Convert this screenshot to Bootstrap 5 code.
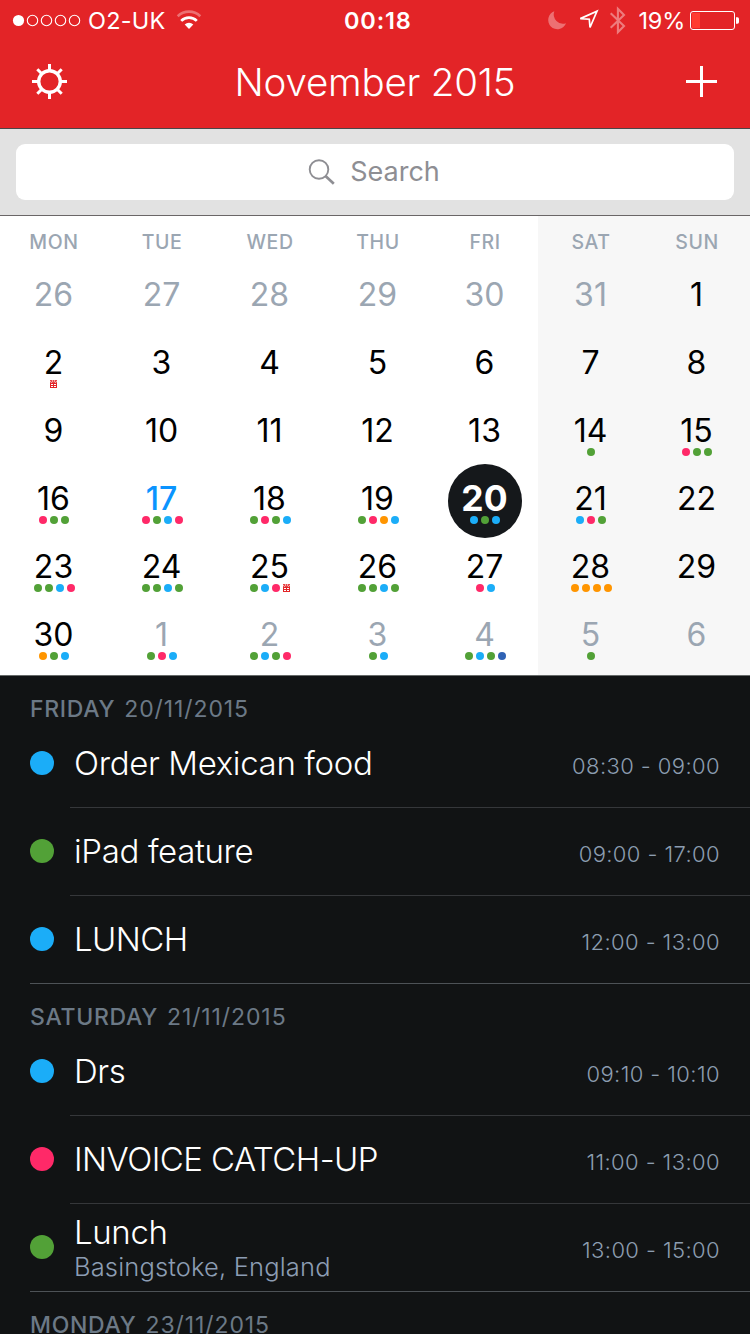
<!DOCTYPE html>
<html lang="en">
<head>
<meta charset="utf-8">
<meta name="viewport" content="width=device-width, initial-scale=1">
<title>Calendar</title>
<link href="https://cdn.jsdelivr.net/npm/bootstrap@5.3.0/dist/css/bootstrap.min.css" rel="stylesheet">
<style>
  :root { --blue:#1badf8; --green:#52a137; --pink:#ff2968; --orange:#ff9500; --navy:#2f62b4; }
  body { font-family: Inter, "Liberation Sans", sans-serif; width:750px; height:1334px; overflow:hidden; background:#111314; line-height:1; }
  svg { display:block; flex:none; overflow:visible; }
  .top-bar { background:#e32427; height:129px; border-bottom:1px solid #4b4647; color:#fff; }
  .status { height:41px; display:grid; grid-template-columns:344px 1fr auto; font-size:23.5px; white-space:nowrap; }
  .carrier { letter-spacing:.2px; }
  .clock { font-weight:600; letter-spacing:.85px; }
  .battery-text { width:48px; letter-spacing:-.2px; padding-left:.5px; }
  .title-row { height:82px; display:grid; grid-template-columns:64px 1fr 64px; }
  .month { font-weight:300; font-size:38.5px; letter-spacing:-.2px; }
  .search-bar { height:87px; background:#e2e2e2; border-bottom:1px solid #6a6667; padding:15px 16px; }
  .search-box { height:56px; border-radius:9px; background:#fff; color:#8e8e93; font-size:27px; gap:14px; padding:0 2px 1px 0; }
  .calendar { height:460px; border-bottom:1px solid #666a69; background:linear-gradient(90deg,#fff 538px,#f7f7f7 538px); }
  .week { display:grid; grid-template-columns:repeat(4,108px) repeat(3,106px); text-align:center; }
  .names { height:44px; padding-top:17px; font-size:19.5px; font-weight:500; letter-spacing:.6px; line-height:19px; color:#9ba6b2; }
  .day { height:68px; position:relative; font-size:32px; line-height:32px; padding-top:19px; color:#000; }
  .day.other { color:#9ba6b2; }
  .day.today { color:#0a94ff; font-weight:500; }
  .day.chosen { color:#fff; font-weight:700; font-size:35.5px; }
  .day.chosen::before { content:""; position:absolute; width:74px; height:74px; border-radius:50%; background:#15181b; left:16px; top:0; }
  .day .num, .day .marks { position:relative; }
  .num { display:block; height:32px; padding-right:1px; }
  .marks { height:8px; gap:3px; margin-top:1px; }
  .mark-dot { width:8px; height:8px; border-radius:50%; }
  .blue { background:var(--blue); } .green { background:var(--green); } .pink { background:var(--pink); } .orange { background:var(--orange); } .navy { background:var(--navy); }
  .agenda-head { height:44px; padding:22px 0 0 30px; font-size:23px; line-height:23px; color:#6c7986; white-space:nowrap; }
  .agenda-head b { font-weight:500; letter-spacing:.7px; }
  .agenda-head span { letter-spacing:.9px; margin-left:9px; }
  .event { height:88px; padding-left:30px; }
  .event-dot { width:24px; height:24px; border-radius:50%; margin-right:16px; margin-bottom:2px; flex:none; }
  .event-body { height:88px; border-bottom:1px solid #35373a; padding:0 30px 2px 4px; }
  .event.final { background:linear-gradient(#4d5256,#4d5256) 30px 87px/100% 1px no-repeat; }
  .event.final .event-body { border-color:transparent; }
  .event-name { color:#fff; font-weight:300; font-size:33px; line-height:40px; letter-spacing:-.36px; }
  .event-name.caps { letter-spacing:-.55px; }
  .event-place { color:#8c9db3; font-weight:300; font-size:25.5px; line-height:30px; letter-spacing:.15px; }
  .event-time { color:#8c9db0; font-weight:300; font-size:22px; letter-spacing:.4px; padding-top:7px; }
</style>
</head>
<body>
<header class="top-bar">
  <div class="status align-items-center">
    <div class="d-flex align-items-center carrier">
      <svg width="88" height="41" viewBox="0 0 88 41" fill="none" stroke="#fff" stroke-width="1.1"><circle cx="18.5" cy="20.5" r="5.6" fill="#fff" stroke="none"/><circle cx="32.5" cy="20.5" r="5.2"/><circle cx="46.5" cy="20.5" r="5.2"/><circle cx="60.5" cy="20.5" r="5.2"/><circle cx="74.5" cy="20.5" r="5.2"/></svg>
      <span>O2-UK</span>
      <svg width="40" height="41" viewBox="164.5 0 40 41" fill="none" stroke="#fff"><path d="M188.500 28.900L184.200 24.600A6.080 6.080 0 0 1 192.800 24.600Z" fill="#fff" stroke="none"/><path d="M180.700 20.900A11 11 0 0 1 196.300 20.900" stroke-width="2.7"/><path d="M177.200 16.200A16.500 16.500 0 0 1 199.800 16.200" stroke-width="2.7" opacity=".35"/></svg>
    </div>
    <div class="clock">00:18</div>
    <div class="d-flex align-items-center">
      <svg width="98" height="41" viewBox="540 0 98 41"><path d="M554.300 11.300A9.200 9.200 0 1 0 566 23.200A9.300 9.300 0 0 1 554.300 11.300Z" fill="#fff" opacity=".35"/><path d="M580.300 18.600L597 11.100L590 27.500L589.300 19.200Z" fill="none" stroke="#fff" stroke-width="1.7"/><path d="M610.700 13.300L624 26L617.900 32.200V8.800L624 15L610.700 27.700" fill="none" stroke="#fff" stroke-width="2.1" opacity=".4"/></svg>
      <span class="battery-text">19%</span>
      <svg width="64" height="41" viewBox="686 0 64 41"><rect x="690.500" y="11.500" width="44" height="18" rx="2.500" fill="none" stroke="#fff"/><rect x="692" y="13" width="8" height="15" fill="#ff3b30"/><path d="M736 17.300H737.500Q739 17.300 739 19V22Q739 23.700 737.500 23.700H736Z" fill="#fff"/></svg>
    </div>
  </div>
  <div class="title-row align-items-center">
    <svg width="64" height="82" viewBox="0 41 64 82" fill="none" stroke="#fff" stroke-width="3"><circle cx="49.500" cy="81.500" r="10.800" stroke-width="3.400"/><path d="M49.500 64V70M49.500 93V99M32 81.500H38M61 81.500H67M37.300 69.300L41.800 73.800M57.200 89.200L61.700 93.700M61.700 69.300L57.200 73.800M41.800 89.200L37.300 93.700"/></svg>
    <div class="month text-center">November 2015</div>
    <svg width="64" height="82" viewBox="686 41 64 82" fill="none" stroke="#fff" stroke-width="3"><path d="M686 81.500H717M701.500 66V97"/></svg>
  </div>
</header>

<div class="search-bar">
  <div class="search-box d-flex align-items-center justify-content-center">
    <svg width="28" height="28" viewBox="0 0 28 28" fill="none" stroke="#8e8e93"><circle cx="11" cy="11.500" r="9.300" stroke-width="1.900"/><path d="M17.500 18L25.800 25.800" stroke-width="2.700"/></svg>
    <span>Search</span>
  </div>
</div>

<main class="calendar">
  <div class="week names"><div>MON</div><div>TUE</div><div>WED</div><div>THU</div><div>FRI</div><div>SAT</div><div>SUN</div></div>
  <div class="week" id="days"></div>
</main>

<section id="agenda"></section>

<script src="https://cdn.jsdelivr.net/npm/bootstrap@5.3.0/dist/js/bootstrap.bundle.min.js"></script>
<script>
  const colours = { b: 'blue', g: 'green', p: 'pink', o: 'orange', n: 'navy' };
  const gift = '<svg width="8" height="8" viewBox="0 0 8 8" shape-rendering="crispEdges"><path fill="#e32427" d="M0 3h7v5H0z"/><path fill="#fff" d="M1 4h2v1H1zM4 4h2v1H4zM1 6h2v1H1zM4 6h2v1H4z"/><path fill="#e32427" opacity=".4" d="M0 0h7v3H0z"/><path fill="#e32427" opacity=".75" d="M0 0h2v1H0zM3 0h1v1H3zM5 0h2v1H5zM1 1h1v1H1zM3 1h1v1H3zM5 1h1v1H5zM0 2h1v1H0zM2 2h3v1H2zM6 2h1v1H6z"/></svg>';

  // "day:marks", with x for a birthday
  const weeks = '26 27 28 29 30 31 1 2:x 3 4 5 6 7 8 9 10 11 12 13 14:g 15:pgg 16:pgg 17:pgbp 18:gpgb 19:gpob 20:bgb 21:bpg 22 ' +
    '23:ggbp 24:ggbg 25:gbpx 26:ggbg 27:pb 28:oooo 29 30:ogb 1:gpb 2:gbgp 3:gb 4:gbgn 5:g 6';
  document.getElementById('days').innerHTML = weeks.split(' ').map((entry, i) => {
    const [n, marks = ''] = entry.split(':');
    const state = i < 6 || i > 35 ? ' other' : n === '17' ? ' today' : n === '20' ? ' chosen' : '';
    const dots = [...marks].map(m => m === 'x' ? gift : `<i class="mark-dot ${colours[m]}"></i>`).join('');
    return `<div class="day${state}"><span class="num">${n}</span><div class="marks d-flex justify-content-center">${dots}</div></div>`;
  }).join('');

  const agenda = [
    ['FRIDAY', '20/11/2015', [['b', 'Order Mexican food', '08:30 - 09:00'], ['g', 'iPad feature', '09:00 - 17:00'], ['b', 'LUNCH', '12:00 - 13:00']]],
    ['SATURDAY', '21/11/2015', [['b', 'Drs', '09:10 - 10:10'], ['p', 'INVOICE CATCH-UP', '11:00 - 13:00'], ['g', 'Lunch', '13:00 - 15:00', 'Basingstoke, England']]],
    ['MONDAY', '23/11/2015', []]
  ];
  document.getElementById('agenda').innerHTML = agenda.map(([day, date, events]) =>
    `<div class="agenda-head"><b>${day}</b><span>${date}</span></div>` +
    events.map(([c, name, time, place], i) =>
      `<div class="event d-flex align-items-center${i === events.length - 1 ? ' final' : ''}"><i class="event-dot ${colours[c]}"></i>` +
      `<div class="event-body flex-grow-1 d-flex align-items-center justify-content-between"><div><div class="event-name${name === name.toUpperCase() ? ' caps' : ''}">${name}</div>` +
      (place ? `<div class="event-place">${place}</div>` : '') + `</div><div class="event-time">${time}</div></div></div>`).join('')
  ).join('');
</script>
</body>
</html>
